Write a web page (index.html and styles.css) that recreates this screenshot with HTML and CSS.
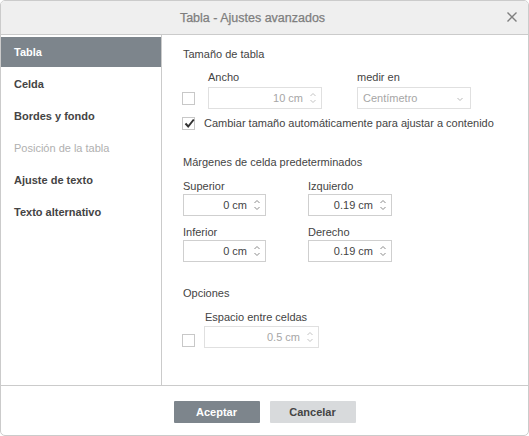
FILE: index.html
```html
<!DOCTYPE html>
<html lang="es">
<head>
<meta charset="utf-8">
<title>Tabla - Ajustes avanzados</title>
<link rel="stylesheet" href="styles.css">
</head>
<body>
<div class="dialog">
  <div class="header">
    <span class="title">Tabla - Ajustes avanzados</span>
    <span class="close">
      <svg width="10" height="10" viewBox="0 0 10 10"><path d="M0.5 0.5 L9.5 9.5 M9.5 0.5 L0.5 9.5" stroke="#7f7f7f" stroke-width="1.4" fill="none"/></svg>
    </span>
  </div>
  <div class="main">
    <nav class="sidebar">
      <div class="nav-item active">Tabla</div>
      <div class="nav-item">Celda</div>
      <div class="nav-item">Bordes y fondo</div>
      <div class="nav-item disabled">Posición de la tabla</div>
      <div class="nav-item">Ajuste de texto</div>
      <div class="nav-item">Texto alternativo</div>
    </nav>
    <div class="content">
      <div class="section-title">Tamaño de tabla</div>
      <div class="size-grid">
        <span class="checkbox cb-size"></span>
        <div class="label lbl-width">Ancho</div>
        <div class="label lbl-unit">medir en</div>
        <div class="spin disabled spin-width">10 cm
          <svg class="arrows" width="8" height="14" viewBox="0 0 8 14"><path d="M1.5 5 L4 2.5 L6.5 5 M1.5 9 L4 11.5 L6.5 9" stroke="currentColor" stroke-width="1" fill="none"/></svg>
        </div>
        <div class="combo disabled">Centímetro
          <svg class="combo-arrow" width="8" height="5" viewBox="0 0 8 5"><path d="M1.5 1 L4 3.5 L6.5 1" stroke="currentColor" stroke-width="1" fill="none"/></svg>
        </div>
      </div>
      <div class="check-row">
        <span class="checkbox checked">
          <svg width="11" height="11" viewBox="0 0 11 11"><path d="M1.5 5.5 L4.2 8.5 L9.8 1.5" stroke="#333" stroke-width="2" fill="none"/></svg>
        </span>
        <span>Cambiar tamaño automáticamente para ajustar a contenido</span>
      </div>

      <div class="section-title second">Márgenes de celda predeterminados</div>
      <div class="margins-grid">
        <div class="field">
          <div class="label">Superior</div>
          <div class="spin">0 cm
            <svg class="arrows" width="8" height="14" viewBox="0 0 8 14"><path d="M1.5 5 L4 2.5 L6.5 5 M1.5 9 L4 11.5 L6.5 9" stroke="currentColor" stroke-width="1" fill="none"/></svg>
          </div>
        </div>
        <div class="field">
          <div class="label">Izquierdo</div>
          <div class="spin">0.19 cm
            <svg class="arrows" width="8" height="14" viewBox="0 0 8 14"><path d="M1.5 5 L4 2.5 L6.5 5 M1.5 9 L4 11.5 L6.5 9" stroke="currentColor" stroke-width="1" fill="none"/></svg>
          </div>
        </div>
        <div class="field">
          <div class="label">Inferior</div>
          <div class="spin">0 cm
            <svg class="arrows" width="8" height="14" viewBox="0 0 8 14"><path d="M1.5 5 L4 2.5 L6.5 5 M1.5 9 L4 11.5 L6.5 9" stroke="currentColor" stroke-width="1" fill="none"/></svg>
          </div>
        </div>
        <div class="field">
          <div class="label">Derecho</div>
          <div class="spin">0.19 cm
            <svg class="arrows" width="8" height="14" viewBox="0 0 8 14"><path d="M1.5 5 L4 2.5 L6.5 5 M1.5 9 L4 11.5 L6.5 9" stroke="currentColor" stroke-width="1" fill="none"/></svg>
          </div>
        </div>
      </div>

      <div class="section-title third">Opciones</div>
      <div class="spacing-grid">
        <div class="label">Espacio entre celdas</div>
        <span class="checkbox cb-spacing"></span>
        <div class="spin disabled">0.5 cm
          <svg class="arrows" width="8" height="14" viewBox="0 0 8 14"><path d="M1.5 5 L4 2.5 L6.5 5 M1.5 9 L4 11.5 L6.5 9" stroke="currentColor" stroke-width="1" fill="none"/></svg>
        </div>
      </div>
    </div>
  </div>
  <div class="footer">
    <button class="btn primary">Aceptar</button>
    <button class="btn">Cancelar</button>
  </div>
</div>
</body>
</html>
```

FILE: styles.css
```css
* {
  box-sizing: border-box;
}

body {
  margin: 0;
  font-family: Arial, "Liberation Sans", sans-serif;
  font-size: 11px;
  color: #444;
  background: #fff;
}

.dialog {
  width: 529px;
  height: 436px;
  border: 1px solid #cbcbcb;
  border-radius: 5px;
  display: flex;
  flex-direction: column;
  overflow: hidden;
  background: #fff;
}

.header {
  height: 34px;
  flex: none;
  background: #efefef;
  border-bottom: 1px solid #cbcbcb;
  display: flex;
  align-items: center;
  justify-content: center;
  padding-right: 24px;
  position: relative;
}

.title {
  font-size: 12.5px;
  font-weight: normal;
  color: #7e7e7e;
  padding-top: 1px;
  -webkit-text-stroke: 0.25px #7e7e7e;
}

.close {
  position: absolute;
  right: 11px;
  top: 11px;
  width: 10px;
  height: 10px;
  display: block;
}

.close svg {
  display: block;
}

.main {
  flex: 1;
  display: flex;
  min-height: 0;
}

.sidebar {
  width: 161px;
  flex: none;
  border-right: 1px solid #cbcbcb;
  padding-top: 2px;
}

.nav-item {
  height: 30px;
  line-height: 30px;
  padding-left: 13px;
  margin-bottom: 2px;
  font-weight: bold;
  color: #444;
}

.nav-item.active {
  background: #7d858c;
  color: #fff;
}

.nav-item.disabled {
  color: #b0b0b0;
  font-weight: normal;
}

.content {
  flex: 1;
  padding: 12px 0 0 21px;
}

.section-title {
  height: 14px;
  line-height: 14px;
}

.section-title.second {
  margin-top: 25px;
}

.section-title.third {
  margin-top: 24px;
}

.label {
  height: 14px;
  line-height: 14px;
  white-space: nowrap;
}

.size-grid {
  margin-top: 9px;
  margin-left: -1px;
  display: grid;
  grid-template-columns: 26px 149px 114px;
  grid-template-rows: 14px 22px;
  row-gap: 3px;
}

.cb-size {
  grid-column: 1;
  grid-row: 2;
  align-self: center;
}

.lbl-width {
  grid-column: 2;
  grid-row: 1;
}

.lbl-unit {
  grid-column: 3;
  grid-row: 1;
}

.spin-width {
  grid-column: 2;
  grid-row: 2;
  width: 114px;
}

.size-grid .combo {
  grid-column: 3;
  grid-row: 2;
}

.checkbox {
  display: block;
  width: 13px;
  height: 13px;
  border: 1px solid #c8c8c8;
  background: #fff;
  position: relative;
}

.checkbox.checked svg {
  position: absolute;
  left: 1px;
  top: 0px;
}

.spin {
  position: relative;
  height: 22px;
  line-height: 20px;
  border: 1px solid #cfcfcf;
  text-align: right;
  padding-right: 18px;
  color: #444;
  white-space: nowrap;
}

.spin .arrows {
  position: absolute;
  right: 4px;
  top: 3px;
  color: #8a8a8a;
}

.spin.disabled {
  border-color: #e0e0e0;
  color: #a6a6a6;
}

.spin.disabled .arrows {
  color: #c4c4c4;
}

.combo {
  position: relative;
  height: 22px;
  line-height: 20px;
  border: 1px solid #e0e0e0;
  padding-left: 5px;
  color: #a6a6a6;
}

.combo-arrow {
  position: absolute;
  right: 6px;
  top: 9px;
  color: #b8b8b8;
}

.check-row {
  margin-top: 7px;
  margin-left: -1px;
  height: 14px;
  display: flex;
  align-items: center;
  gap: 9px;
  line-height: 14px;
}

.margins-grid {
  margin-top: 10px;
  display: grid;
  grid-template-columns: 83px 84px;
  column-gap: 42px;
  row-gap: 9px;
}

.field {
  display: flex;
  flex-direction: column;
  gap: 1px;
}

.spacing-grid {
  margin-top: 10px;
  margin-left: -1px;
  display: grid;
  grid-template-columns: 22px 115px;
  grid-template-rows: 14px 22px;
  row-gap: 2px;
}

.spacing-grid .label {
  grid-column: 2;
  grid-row: 1;
  padding-left: 1px;
}

.cb-spacing {
  grid-column: 1;
  grid-row: 2;
  align-self: end;
  margin-bottom: 1px;
}

.spacing-grid .spin {
  grid-column: 2;
  grid-row: 2;
}

.footer {
  height: 50px;
  flex: none;
  border-top: 1px solid #cbcbcb;
  display: flex;
  justify-content: center;
  align-items: flex-start;
  gap: 10px;
  padding-top: 15px;
}

.btn {
  width: 86px;
  height: 22px;
  border: none;
  border-radius: 1px;
  background: #d8dadc;
  color: #444;
  font-family: Arial, "Liberation Sans", sans-serif;
  font-size: 11px;
  font-weight: bold;
  padding: 0;
  line-height: 22px;
}

.btn.primary {
  background: #7d858c;
  color: #fff;
}
```
